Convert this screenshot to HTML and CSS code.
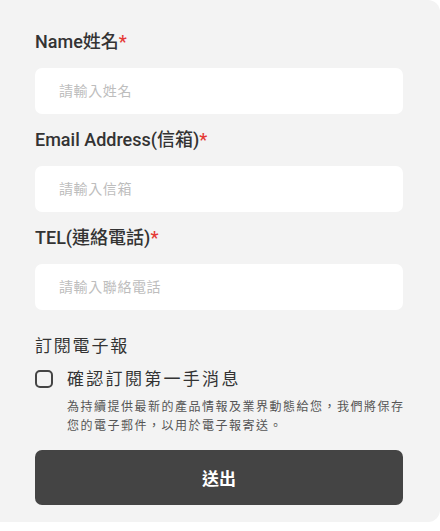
FILE: index.html
```html
<!DOCTYPE html>
<html lang="zh-Hant">
<head>
    <meta charset="UTF-8">
    <meta name="viewport" content="width=device-width, initial-scale=1.0">
    <title>訂閱表單</title>
    <link rel="stylesheet" href="styles.css">
</head>
<body>
    <!-- 表單 -->
    <form class="card">
        <label class="field-label" for="name">Name姓名<span class="req">*</span></label>
        <input class="field-input" type="text" id="name" placeholder="請輸入姓名">

        <label class="field-label" for="email">Email Address(信箱)<span class="req">*</span></label>
        <input class="field-input" type="email" id="email" placeholder="請輸入信箱">

        <label class="field-label" for="tel">TEL(連絡電話)<span class="req">*</span></label>
        <input class="field-input" type="tel" id="tel" placeholder="請輸入聯絡電話">

        <!-- 訂閱 -->
        <h3 class="sub-title">訂閱電子報</h3>
        <label class="check-row">
            <input type="checkbox" class="check-box">
            <span>確認訂閱第一手消息</span>
        </label>
        <p class="note">為持續提供最新的產品情報及業界動態給您，我們將保存您的電子郵件，以用於電子報寄送。</p>

        <button type="button" class="submit-btn">送出</button>
    </form>
</body>
</html>
```

FILE: styles.css
```css
body {
    margin: 0;
    background-color: white;
    font-family: Roboto, "Noto Sans CJK TC", sans-serif;
    color: #333;
}

.card {
    display: flex;
    flex-direction: column;
    background-color: #f3f3f3;
    border-radius: 0 12px 12px 0;
    padding: 30px 37px 16px 35px;
    height: 476px;
}

.field-label {
    font-size: 18px;
    font-weight: 500;
    line-height: 24px;
    margin-bottom: 14px;
    color: #333;
}

.req {
    color: #e53935;
}

.field-input {
    height: 46px;
    box-sizing: border-box;
    border: none;
    border-radius: 7px;
    background-color: white;
    padding: 0 24px;
    margin: 0 0 14px 0;
    font-family: inherit;
    font-size: 14px;
    letter-spacing: 0.6px;
    outline: none;
}

.field-input::placeholder {
    color: #bdbdbd;
}

.sub-title {
    margin: 10px 0 0 0;
    font-size: 17px;
    font-weight: 400;
    line-height: 24px;
    letter-spacing: 1.8px;
    color: #333;
}

.check-row {
    display: flex;
    align-items: center;
    gap: 14px;
    margin-top: 9px;
    font-size: 17px;
    letter-spacing: 2.3px;
    line-height: 24px;
}

.check-box {
    appearance: none;
    width: 18px;
    height: 18px;
    margin: 0;
    border: 2px solid #444;
    border-radius: 5px;
    background-color: transparent;
}

.note {
    margin: 7px -6px 0 32px;
    font-size: 12px;
    line-height: 19px;
    letter-spacing: 1.5px;
    color: #555;
}

.submit-btn {
    margin-top: 14px;
    height: 55px;
    border: none;
    border-radius: 7px;
    background-color: #444;
    color: white;
    font-family: inherit;
    font-size: 17px;
    font-weight: 700;
    cursor: pointer;
}
```
